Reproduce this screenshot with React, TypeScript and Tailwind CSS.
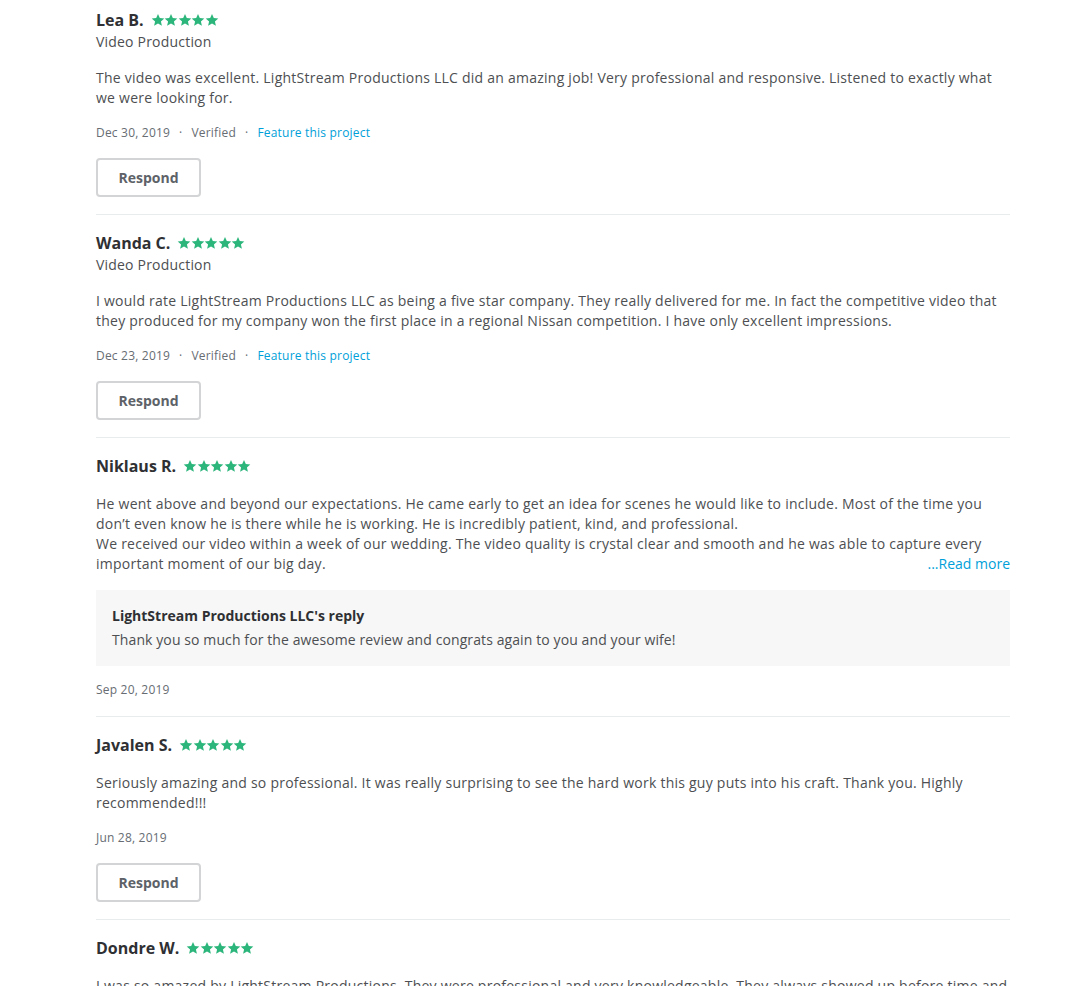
import React from 'react';

type Review = {
    name: string;
    category?: string;
    body: string[];
    date: string;
    verified?: boolean;
    readMore?: boolean;
    reply?: string;
    respond?: boolean;
};

const reviews: Review[] = [
    {
        name: 'Lea B.',
        category: 'Video Production',
        body: ['The video was excellent. LightStream Productions LLC did an amazing job! Very professional and responsive. Listened to exactly what we were looking for.'],
        date: 'Dec 30, 2019',
        verified: true,
        respond: true,
    },
    {
        name: 'Wanda C.',
        category: 'Video Production',
        body: ['I would rate LightStream Productions LLC as being a five star company. They really delivered for me. In fact the competitive video that they produced for my company won the first place in a regional Nissan competition. I have only excellent impressions.'],
        date: 'Dec 23, 2019',
        verified: true,
        respond: true,
    },
    {
        name: 'Niklaus R.',
        body: [
            'He went above and beyond our expectations. He came early to get an idea for scenes he would like to include. Most of the time you don\u2019t even know he is there while he is working. He is incredibly patient, kind, and professional.',
            'We received our video within a week of our wedding. The video quality is crystal clear and smooth and he was able to capture every important moment of our big day.',
        ],
        date: 'Sep 20, 2019',
        readMore: true,
        reply: 'Thank you so much for the awesome review and congrats again to you and your wife!',
    },
    {
        name: 'Javalen S.',
        body: ['Seriously amazing and so professional. It was really surprising to see the hard work this guy puts into his craft. Thank you. Highly recommended!!!'],
        date: 'Jun 28, 2019',
        respond: true,
    },
    {
        name: 'Dondre W.',
        body: ['I was so amazed by LightStream Productions. They were professional and very knowledgeable. They always showed up before time and were ready to go. I would recommend them to anyone looking for quality video work.'],
        date: 'May 14, 2019',
        respond: true,
    },
];

const Stars = () => (
    <div className="flex items-center ml-[7px]">
        {[0, 1, 2, 3, 4].map(i => (
            <svg key={i} width="14" height="14" viewBox="0 0 24 24" className="mr-[-0.5px]">
                <path fill="#2db67c" d="M12 1.5l3.1 7.1 7.7.7-5.8 5.1 1.7 7.6L12 18l-6.7 4 1.7-7.6-5.8-5.1 7.7-.7z" />
            </svg>
        ))}
    </div>
);

const ReviewItem: React.FC<{ review: Review; first?: boolean }> = ({ review, first }) => (
    <div className={`${first ? 'pt-2' : 'pt-4'} pb-[17px] border-b border-[#e9eced]`}>
        <div className="flex items-center h-6">
            <span className="text-[16px] font-bold text-[#2f3033]">{review.name}</span>
            <Stars />
        </div>
        {review.category && <div className="text-[14px] leading-5 tracking-[0.2px] text-[#4d4f52]">{review.category}</div>}

        <div className="mt-4 text-[14px] leading-5 tracking-[0.24px] text-[#4d4f52]">
            {review.body.map((p, i) => (
                <p key={i}>
                    {p}
                    {review.readMore && i === review.body.length - 1 && (
                        <span className="float-right tracking-normal text-[#009fd9]">...Read more</span>
                    )}
                </p>
            ))}
        </div>

        {review.reply && (
            <div className="mt-4 bg-[#f7f7f7] px-4 py-4">
                <div className="text-[14px] leading-5 font-bold text-[#2f3033]">LightStream Productions LLC's reply</div>
                <div className="mt-1 text-[14px] leading-5 tracking-[0.1px] text-[#4d4f52]">{review.reply}</div>
            </div>
        )}

        <div className={`${review.reply ? 'mt-[15px]' : 'mt-4'} flex items-center text-[12px] leading-[18px] tracking-[0.2px] text-[#676d73]`}>
            <span>{review.date}</span>
            {review.verified && (
                <>
                    <span className="mx-[9px]">·</span>
                    <span>Verified</span>
                    <span className="mx-[9px]">·</span>
                    <span className="text-[#009fd9]">Feature this project</span>
                </>
            )}
        </div>

        {review.respond && (
            <button className="mt-4 h-[39px] w-[105px] rounded border-2 border-[#d3d4d5] bg-white text-[14px] font-bold text-[#5d6268]">
                Respond
            </button>
        )}
    </div>
);

export default function App() {
    return (
        <div className="min-h-screen bg-white" style={{ fontFamily: '"Open Sans", "Liberation Sans", sans-serif' }}>
            <div className="ml-[96px] w-[914px]">
                {reviews.map((r, i) => (
                    <ReviewItem key={r.name} review={r} first={i === 0} />
                ))}
            </div>
        </div>
    );
}
